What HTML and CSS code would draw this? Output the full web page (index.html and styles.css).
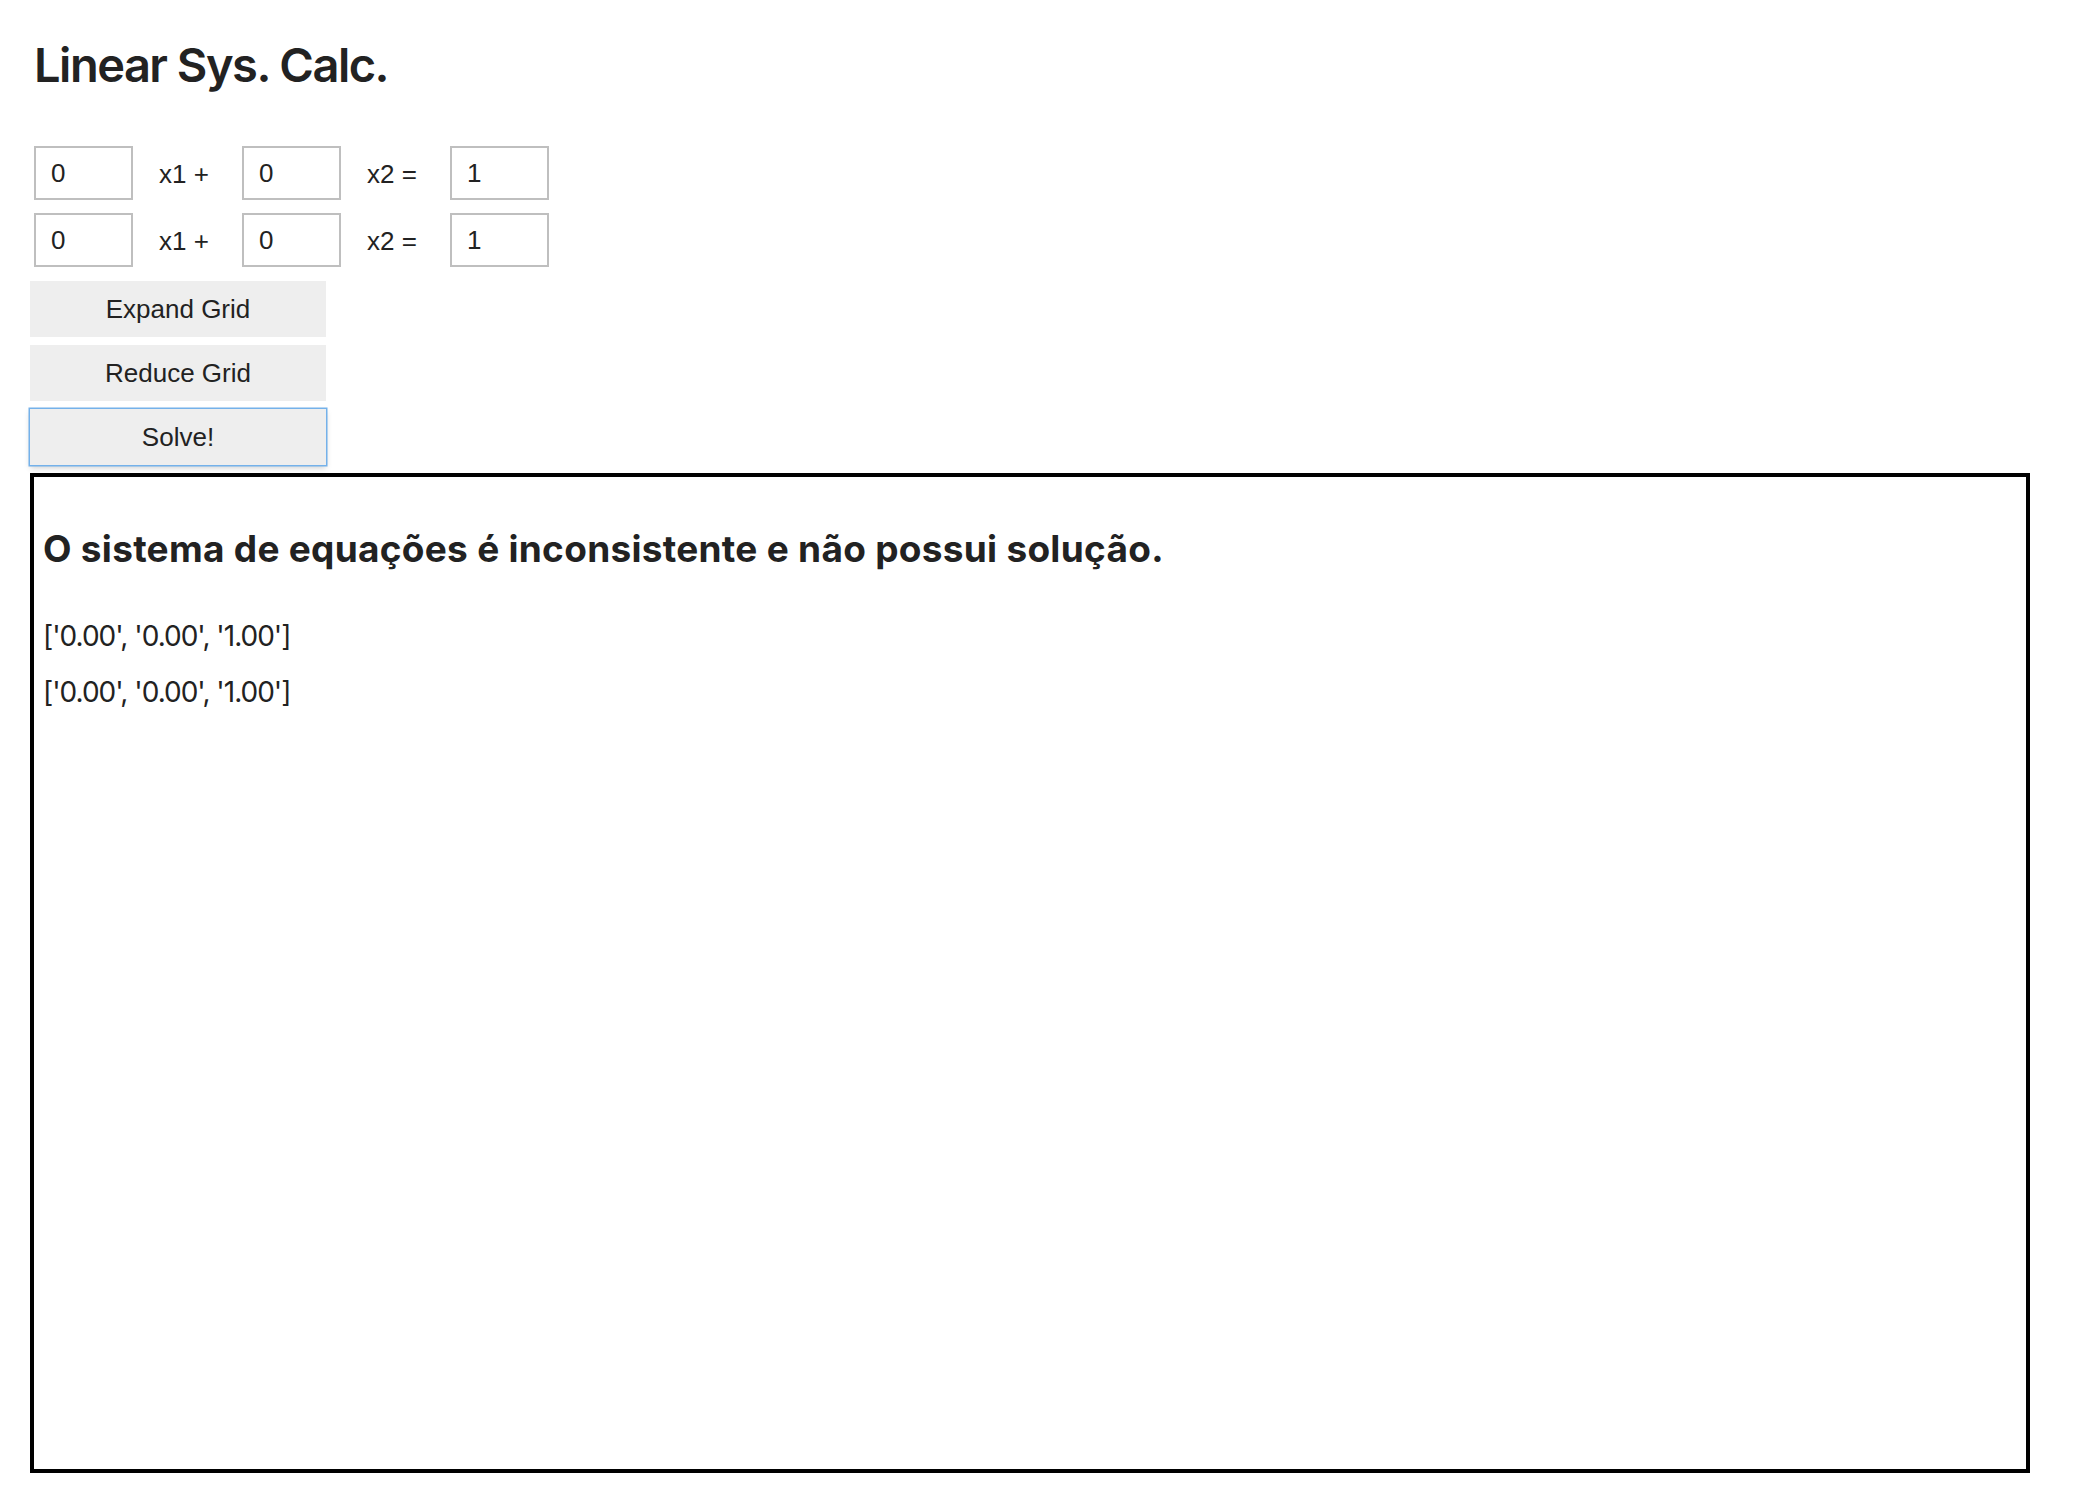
FILE: index.html
```html
<!DOCTYPE html>
<html lang="pt">
<head>
<meta charset="utf-8">
<title>Linear Sys. Calc.</title>
<link rel="stylesheet" href="styles.css">
</head>
<body>
<div class="app">
  <h1 class="title">Linear Sys. Calc.</h1>
  <div class="grid">
    <div class="eq-row">
      <input class="cell" type="text" value="0">
      <span class="term">x1 +</span>
      <input class="cell" type="text" value="0">
      <span class="term">x2 =</span>
      <input class="cell" type="text" value="1">
    </div>
    <div class="eq-row">
      <input class="cell" type="text" value="0">
      <span class="term">x1 +</span>
      <input class="cell" type="text" value="0">
      <span class="term">x2 =</span>
      <input class="cell" type="text" value="1">
    </div>
  </div>
  <div class="actions">
    <button class="btn" type="button">Expand Grid</button>
    <button class="btn" type="button">Reduce Grid</button>
    <button class="btn btn-focus" type="button">Solve!</button>
  </div>
  <div class="result">
    <h2 class="result-title">O sistema de equações é inconsistente e não possui solução.</h2>
    <p class="result-row">['0.00', '0.00', '1.00']</p>
    <p class="result-row">['0.00', '0.00', '1.00']</p>
  </div>
</div>
</body>
</html>
```

FILE: styles.css
```css
html, body {
  margin: 0;
  padding: 0;
  background: #ffffff;
}

body {
  font-family: Inter, "Noto Sans", sans-serif;
  color: #222222;
}

.app {
  padding: 36px 30px 0 30px;
  display: flex;
  flex-direction: column;
  align-items: flex-start;
}

.title {
  margin: 0 0 0 4px;
  font-size: 47px;
  font-weight: 600;
  line-height: 57px;
  letter-spacing: -1.5px;
  color: #222222;
}

.grid {
  margin: 53px 0 0 4px;
  display: flex;
  flex-direction: column;
  gap: 13px;
}

.eq-row {
  display: flex;
  align-items: center;
}

.cell {
  box-sizing: border-box;
  width: 99px;
  height: 54px;
  margin: 0;
  padding: 0 0 0 15px;
  border: 2px solid #bfbfbf;
  border-radius: 0;
  background: #ffffff;
  font-family: "Liberation Sans", Arial, sans-serif;
  font-size: 26px;
  color: #222222;
  outline: none;
}

.term {
  box-sizing: border-box;
  width: 109px;
  padding: 2px 0 0 26px;
  font-family: "Liberation Sans", Arial, sans-serif;
  font-size: 26px;
  color: #222222;
  white-space: pre;
}

.actions {
  margin-top: 14px;
  display: flex;
  flex-direction: column;
  gap: 8px;
}

.btn {
  box-sizing: border-box;
  width: 296px;
  height: 56px;
  margin: 0;
  padding: 0;
  border: none;
  border-radius: 0;
  background: #eeeeee;
  font-family: "Liberation Sans", Arial, sans-serif;
  font-size: 26px;
  color: #222222;
  text-align: center;
}

.btn-focus {
  box-shadow: 0 0 0 1.5px #74b1ea, 0 3px 6px rgba(0, 0, 0, 0.18);
}

.result {
  box-sizing: border-box;
  margin-top: 8px;
  width: 2000px;
  height: 1000px;
  border: 4px solid #000000;
  padding: 49px 9px 0 9px;
}

.result-title {
  margin: 0 0 48px 0;
  font-size: 37px;
  font-weight: 700;
  line-height: 45px;
  letter-spacing: 0.28px;
  color: #222222;
}

.result-row {
  margin: 0 0 22px 0;
  font-size: 28px;
  line-height: 34px;
  letter-spacing: -1px;
  color: #222222;
}
```
